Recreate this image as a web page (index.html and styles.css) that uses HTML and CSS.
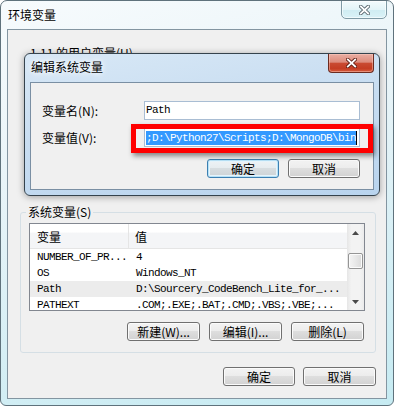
FILE: index.html
```html
<!DOCTYPE html>
<html lang="zh-CN">
<head>
<meta charset="utf-8">
<title>环境变量</title>
<link rel="stylesheet" href="styles.css">
</head>
<body>
<div class="win">
  <div class="win-title">
    <span class="title-text">环境变量</span>
    <div class="cap-close">
      <svg width="11" height="10" viewBox="0 0 11 10"><path d="M1.8 1.5 L9.2 8.5 M9.2 1.5 L1.8 8.5" stroke="#55636b" stroke-width="3.6" stroke-linecap="square" fill="none"/><path d="M1.8 1.5 L9.2 8.5 M9.2 1.5 L1.8 8.5" stroke="#fff" stroke-width="1.8" stroke-linecap="square" fill="none"/></svg>
    </div>
  </div>
  <div class="client">
    <div class="user-group"><span class="group-label">1.11 的用户变量(U)</span></div>
    <fieldset class="sys-group">
      <legend>系统变量(S)</legend>
      <div class="listbox">
        <div class="lv">
          <div class="lv-head"><div class="c1">变量</div><div class="c2">值</div></div>
          <div class="lv-row"><div class="c1 mono">NUMBER_OF_PR...</div><div class="c2 mono">4</div></div>
          <div class="lv-row"><div class="c1 mono">OS</div><div class="c2 mono">Windows_NT</div></div>
          <div class="lv-row is-sel"><div class="c1 mono">Path</div><div class="c2 mono">D:\Sourcery_CodeBench_Lite_for_...</div></div>
          <div class="lv-row"><div class="c1 mono">PATHEXT</div><div class="c2 mono">.COM;.EXE;.BAT;.CMD;.VBS;.VBE;...</div></div>
        </div>
        <div class="sb">
          <div class="sb-btn"><svg width="7" height="4" viewBox="0 0 7 4"><polygon points="3.5,0 7,4 0,4" fill="#4a4a4a"/></svg></div>
          <div class="sb-track"><div class="sb-thumb"></div></div>
          <div class="sb-btn"><svg width="7" height="4" viewBox="0 0 7 4"><polygon points="0,0 7,0 3.5,4" fill="#4a4a4a"/></svg></div>
        </div>
      </div>
      <div class="btn-row">
        <button class="btn wide">新建(W)...</button>
        <button class="btn wide">编辑(I)...</button>
        <button class="btn wide">删除(L)</button>
      </div>
    </fieldset>
    <div class="btn-row bottom">
      <button class="btn">确定</button>
      <button class="btn wide">取消</button>
    </div>
  </div>

  <div class="dlg">
    <div class="dlg-title">
      <span class="title-text dlg-text">编辑系统变量</span>
      <div class="dlg-close">
        <svg width="11" height="10" viewBox="0 0 11 10"><path d="M1.8 1.5 L9.2 8.5 M9.2 1.5 L1.8 8.5" stroke="#5a1a10" stroke-width="3.6" stroke-linecap="square" fill="none"/><path d="M1.8 1.5 L9.2 8.5 M9.2 1.5 L1.8 8.5" stroke="#fff" stroke-width="1.8" stroke-linecap="square" fill="none"/></svg>
      </div>
    </div>
    <div class="dlg-client">
      <div class="field">
        <label class="field-label">变量名(N):</label>
        <div class="input mono">Path</div>
      </div>
      <div class="field">
        <label class="field-label">变量值(V):</label>
        <div class="input val mono"><span class="sel">;D:\Python27\Scripts;D:\MongoDB\bin</span><span class="caret"></span></div>
      </div>
      <div class="btn-row dlg-btns">
        <button class="btn default">确定</button>
        <button class="btn">取消</button>
      </div>
    </div>
  </div>

  <div class="mark"></div>
</div>
</body>
</html>
```

FILE: styles.css
```css
body {
  margin: 0;
  background: #ffffff;
  font-family: "Noto Sans CJK SC", "Noto Sans", sans-serif;
  font-size: 12px;
  color: #000;
}

.mono {
  font-family: "Liberation Mono", "DejaVu Sans Mono", monospace;
  font-size: 11px;
  letter-spacing: -0.6px;
}

.win {
  position: relative;
  width: 394px;
  height: 406px;
  box-sizing: border-box;
  border: 1px solid #5f727c;
  border-radius: 7px 7px 6px 6px;
  background: linear-gradient(165deg, #f7fbfd 0%, #e9f4f8 35%, #d6eff5 70%, #c6ebf2 100%);
  padding: 0 6px 6px;
  display: flex;
  flex-direction: column;
  overflow: hidden;
}

.win-title {
  height: 28px;
  flex: none;
  display: flex;
  justify-content: space-between;
  align-items: flex-start;
}

.title-text {
  margin: 7px 0 0 1px;
  font-size: 12px;
  line-height: 14px;
  text-shadow: 0 0 5px #fff, 0 0 9px #fff;
}

.cap-close {
  width: 46px;
  height: 19px;
  margin-top: -1px;
  box-sizing: border-box;
  border: 1px solid #7f9aa5;
  border-radius: 0 0 5px 5px;
  background: linear-gradient(#f3fbfd 0%, #e3f4f8 50%, #cfecf2 51%, #daf2f7 100%);
  box-shadow: inset 0 0 0 1px rgba(255,255,255,0.6);
  display: flex;
  align-items: center;
  justify-content: center;
}

.client {
  height: 370px;
  box-sizing: border-box;
  border: 1px solid #8395a1;
  background: #f0f0f0;
  padding: 16px 10px 0 12px;
}

.user-group {
  height: 159px;
  padding-left: 10px;
  line-height: 14px;
}

.sys-group {
  margin: 0;
  padding: 4px 10px 11px 8px;
  border: 1px solid #d5dfe5;
  border-radius: 3px;
  min-width: 0;
}

.sys-group legend {
  padding: 0 2px;
  margin-left: -3px;
  line-height: 14px;
}

.listbox {
  display: flex;
  height: 88px;
  box-sizing: border-box;
  border: 1px solid #828790;
  background: #fff;
}

.lv {
  flex: 1;
  overflow: hidden;
}

.lv-head {
  display: flex;
  height: 25px;
  box-sizing: border-box;
  border-bottom: 1px solid #e5e5e5;
  background: linear-gradient(#ffffff 0%, #ffffff 35%, #f4f5f7 36%, #f4f5f7 100%);
}

.lv-head .c1,
.lv-head .c2 {
  line-height: 22px;
  padding-top: 2px;
}

.lv-head .c1 {
  border-right: 1px solid #e5e5e5;
  padding-left: 7px;
}

.lv-head .c2 {
  padding-left: 6px;
}

.c1 {
  width: 99px;
  flex: none;
  box-sizing: border-box;
  padding-left: 7px;
  white-space: nowrap;
  overflow: hidden;
}

.c2 {
  flex: 1;
  padding-left: 7px;
  white-space: nowrap;
  overflow: hidden;
}

.lv-row {
  display: flex;
  height: 16px;
  line-height: 16px;
}

.lv-row.is-sel {
  background: #ececec;
}

.sb {
  width: 17px;
  flex: none;
  display: flex;
  flex-direction: column;
  background: linear-gradient(to right, #e6e6e6, #f3f3f3 25%, #f3f3f3 75%, #ebebeb);
}

.sb-btn {
  height: 17px;
  flex: none;
  display: flex;
  align-items: center;
  justify-content: center;
}

.sb-track {
  flex: 1;
  padding-top: 12px;
}

.sb-thumb {
  height: 16px;
  margin: 0 1px;
  box-sizing: border-box;
  border: 1px solid #959595;
  border-radius: 2px;
  background: linear-gradient(to right, #f4f4f4, #e8e8e8 50%, #dadada);
  box-shadow: inset 0 0 0 1px #fbfbfb;
}

.btn-row {
  display: flex;
  justify-content: flex-end;
  gap: 9px;
  margin-top: 11px;
  padding-right: 1px;
}

.btn-row.bottom {
  margin-top: 14px;
  gap: 8px;
  padding-right: 0;
}

.btn {
  width: 72px;
  height: 19px;
  box-sizing: border-box;
  border: 1px solid #707070;
  border-radius: 3px;
  background: linear-gradient(#f3f3f3 0%, #ececec 48%, #dedede 50%, #d2d2d2 100%);
  box-shadow: inset 0 0 0 1px #fbfbfb;
  font-family: "Noto Sans CJK SC", "Noto Sans", sans-serif;
  font-size: 12px;
  line-height: 15px;
  padding: 0;
  color: #000;
}

.btn.wide {
  width: 73px;
}

.btn.default {
  border-color: #3c7fb1;
  box-shadow: inset 0 0 0 1px #b7e2f7, inset 0 0 0 2px #e6f4fb;
  background: linear-gradient(#eef3f6 0%, #e6ecef 48%, #d7dde0 50%, #cdd3d6 100%);
}

.dlg {
  position: absolute;
  left: 23px;
  top: 52px;
  width: 356px;
  height: 143px;
  box-sizing: border-box;
  border: 1px solid #35434d;
  border-radius: 6px;
  background: linear-gradient(170deg, #d8e8f6 0%, #c8ddf1 45%, #b9d4ee 100%);
  padding: 0 5px 5px;
  display: flex;
  flex-direction: column;
  box-shadow: 0 1px 7px rgba(0, 0, 0, 0.35);
}

.dlg-title {
  height: 28px;
  flex: none;
  display: flex;
  justify-content: space-between;
  align-items: flex-start;
}

.dlg-text {
  margin-top: 6px;
}

.dlg-close {
  width: 46px;
  height: 19px;
  box-sizing: border-box;
  border: 1px solid #6b2b20;
  border-top: none;
  border-radius: 0 0 4px 4px;
  background: linear-gradient(#e9ada2 0%, #dd8c7c 45%, #c94a31 52%, #c43d23 80%, #d65a3c 100%);
  box-shadow: inset 0 0 0 1px rgba(255, 210, 200, 0.45);
  display: flex;
  align-items: center;
  justify-content: center;
}

.dlg-client {
  flex: 1;
  border: 1px solid #7a8fa3;
  background: #f0f0f0;
  padding: 18px 13px 0 11px;
}

.field {
  display: flex;
  align-items: center;
  height: 19px;
}

.field + .field {
  margin-top: 8px;
}

.field-label {
  width: 102px;
  flex: none;
  line-height: 14px;
}

.input {
  width: 219px;
  height: 19px;
  box-sizing: border-box;
  border: 1px solid #a9bdd3;
  background: #fff;
  line-height: 17px;
  padding-left: 1px;
  white-space: nowrap;
  overflow: hidden;
}

.input.val {
  width: 224px;
  display: flex;
  align-items: center;
}

.sel {
  background: #3399ff;
  color: #fff;
  line-height: 14px;
}

.caret {
  width: 1px;
  height: 14px;
  background: #000;
}

.dlg-btns {
  margin-top: 12px;
  padding-right: 0;
}

.mark {
  position: absolute;
  left: 130px;
  top: 123px;
  width: 242px;
  height: 29px;
  box-sizing: border-box;
  border: 5px solid #ff0000;
  box-shadow: 2px 3px 5px rgba(0, 0, 0, 0.45);
}
```
